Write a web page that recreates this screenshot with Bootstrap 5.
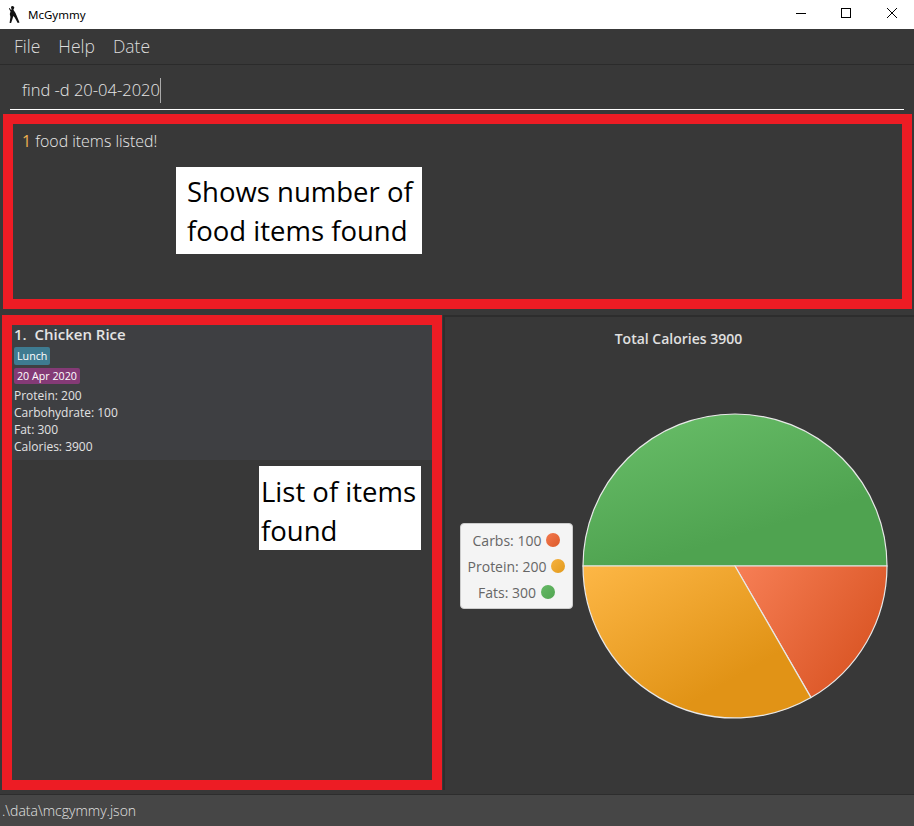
<!DOCTYPE html>
<html lang="en">
<head>
<meta charset="utf-8">
<title>McGymmy</title>
<link href="https://cdn.jsdelivr.net/npm/bootstrap@5.3.0/dist/css/bootstrap.min.css" rel="stylesheet">
<style>
html,body{margin:0;height:826px;overflow:hidden;background:#383838}
body{font-family:"Open Sans","Noto Sans",sans-serif;color:#fff}
.app-shell{width:914px;height:826px;position:relative}
.title-bar{height:29px;background:#fff;color:#000;font-size:11.5px;padding-left:7px}
.title-name{margin-left:7px;font-family:"Noto Sans",sans-serif}
.win-btns{margin-left:auto;align-self:flex-start}
.win-btn{width:46px;height:26px}
.menu-bar{height:36px;background:#383838;border-bottom:1px solid #2b2b2b;padding-left:14px;gap:18px;font-size:17.5px;font-weight:300;color:#dcdcdc}
.cmd-row{height:45px;padding:0 10px}
.cmd-box{height:45px;border-bottom:1px solid #fff;padding:7px 12px 0;font-size:16.5px;font-weight:300;color:#e6e6e6}
.caret-bar{display:inline-block;width:1px;height:25px;background:#aaa}
.frame{border:10px solid #ed1c24}
.result-frame{margin:4px 2px 0 3px;height:195px;padding:6px 0 0 9px;font-size:15.9px;font-weight:300;color:#e8e8e8}
.num-1{color:#f0b050;font-weight:400}
.split{margin-top:6px;height:475px}
.list-frame{width:440px;margin-left:2px;height:475px;background:#383838;flex:none}
.food-card{background:#3e3f42;height:135px;padding:0 0 0 2px;color:#e2e2e2}
.food-title{font-size:15px;font-weight:600;line-height:19px;margin-bottom:3px;color:#e4e4e4}
.tag-wrap{display:flex}
.tag-line{font-size:10.7px;color:#fff;padding:0 3px;border-radius:2px}
.tag-lunch{background:#3e7b91;height:18px;line-height:18px}
.tag-date{background:#843a76;height:16px;line-height:16px;margin:3px 0}
.food-line{font-size:12px;line-height:17px}
.chart-pane{flex:1;border-top:2px solid #2d2d2d;border-left:2px solid #2d2d2d;margin-left:1px;position:relative}
.chart-title{font-size:14px;font-weight:600;text-align:center;color:#e0e0e0;width:467px;margin-top:12px;line-height:20px}
.legend-box{position:absolute;left:15px;top:206px;width:113px;height:86px;background:#f4f4f4;border:1px solid #ccc;border-radius:4px;color:#666;font-size:14px}
.legend-row{height:26px;gap:5px}
.dot{width:14px;height:14px;border-radius:50%}
.dot-c{background:linear-gradient(135deg,#f3794f,#dc5a29)}
.dot-p{background:linear-gradient(135deg,#f6b240,#e29a1c)}
.dot-f{background:linear-gradient(135deg,#66b966,#51a551)}
.pie-svg{position:absolute;left:136px;top:95px}
.status-bar{position:absolute;left:0;right:0;top:794px;height:32px;background:#464646;border-top:1px solid #2d2d2d;padding-left:2px;font-size:14px;font-weight:300;color:#e2e2e2}
.note{position:absolute;background:#fff;color:#000;font-size:27.5px;line-height:39px;white-space:nowrap}
.note-a{left:176px;top:167px;width:246px;height:87px;padding:5px 0 0 11px}
.note-b{left:259px;top:466px;width:162px;height:84px;padding:6px 0 0 2px}
</style>
</head>
<body>
<div class="app-shell">
  <div class="title-bar d-flex align-items-center">
    <svg width="14" height="18" viewBox="0 0 14 18"><path d="M4 1.5a1.6 1.6 0 1 1 3 1l-.6 1.2L8.5 7l1.5 3.5 2.5 6-1.8.5-3-5.5-1.4-1.5-1 3.5-1.2 3.5H2.6l.8-6-.6-3 .7-2.6-1.6-3 .8-.4 1.3 2 .6-.4z" fill="#111"/></svg>
    <span class="title-name">McGymmy</span>
    <div class="win-btns d-flex">
      <div class="win-btn d-flex align-items-center justify-content-center"><svg width="14" height="12"><path d="M4 6.5h10" stroke="#000" fill="none"/></svg></div>
      <div class="win-btn d-flex align-items-center justify-content-center"><svg width="14" height="12"><rect x="3.5" y="1.5" width="9" height="9" stroke="#000" fill="none"/></svg></div>
      <div class="win-btn d-flex align-items-center justify-content-center"><svg width="14" height="12"><path d="M3 1l10 10M13 1L3 11" stroke="#000" fill="none"/></svg></div>
    </div>
  </div>
  <div class="menu-bar d-flex align-items-center"><span>File</span><span>Help</span><span>Date</span></div>
  <div class="cmd-row"><div class="cmd-box d-flex align-items-center">find -d 20-04-2020<span class="caret-bar"></span></div></div>
  <div class="frame result-frame"><span class="num-1">1</span> food items listed!</div>
  <div class="split d-flex">
    <div class="frame list-frame">
      <div class="food-card">
        <div class="food-title">1.&nbsp; Chicken Rice</div>
        <div class="tag-wrap"><span class="tag-line tag-lunch">Lunch</span></div>
        <div class="tag-wrap"><span class="tag-line tag-date">20 Apr 2020</span></div>
        <div class="food-line">Protein: 200</div>
        <div class="food-line">Carbohydrate: 100</div>
        <div class="food-line">Fat: 300</div>
        <div class="food-line">Calories: 3900</div>
      </div>
    </div>
    <div class="chart-pane">
      <div class="chart-title">Total Calories 3900</div>
      <div class="legend-box d-flex flex-column justify-content-center">
        <div class="legend-row d-flex align-items-center justify-content-center">Carbs: 100<span class="dot dot-c"></span></div>
        <div class="legend-row d-flex align-items-center justify-content-center">Protein: 200<span class="dot dot-p"></span></div>
        <div class="legend-row d-flex align-items-center justify-content-center">Fats: 300<span class="dot dot-f"></span></div>
      </div>
      <svg class="pie-svg" width="308" height="308" viewBox="0 0 308 308">
        <defs>
          <linearGradient id="gf" x1="0.15" y1="0" x2="0.6" y2="0.75"><stop offset="0" stop-color="#68bd68"/><stop offset="1" stop-color="#4fa350"/></linearGradient>
          <linearGradient id="gp" x1="0" y1="0" x2="0.65" y2="0.75"><stop offset="0" stop-color="#fdb746"/><stop offset="1" stop-color="#e19316"/></linearGradient>
          <linearGradient id="gc" x1="0" y1="0" x2="1" y2="0.6"><stop offset="0" stop-color="#f77f56"/><stop offset="1" stop-color="#d95423"/></linearGradient>
        </defs>
        <path d="M154 154L2 154A152 152 0 0 1 306 154Z" fill="url(#gf)" stroke="#e8e8e8" stroke-width="1.2"/>
        <path d="M154 154L306 154A152 152 0 0 1 230 285.6Z" fill="url(#gc)" stroke="#e8e8e8" stroke-width="1.2"/>
        <path d="M154 154L230 285.6A152 152 0 0 1 2 154Z" fill="url(#gp)" stroke="#e8e8e8" stroke-width="1.2"/>
      </svg>
    </div>
  </div>
  <div class="status-bar d-flex align-items-center">.\data\mcgymmy.json</div>
  <div class="note note-a">Shows number of<br>food items found</div>
  <div class="note note-b">List of items<br>found</div>
</div>
</body>
</html>
